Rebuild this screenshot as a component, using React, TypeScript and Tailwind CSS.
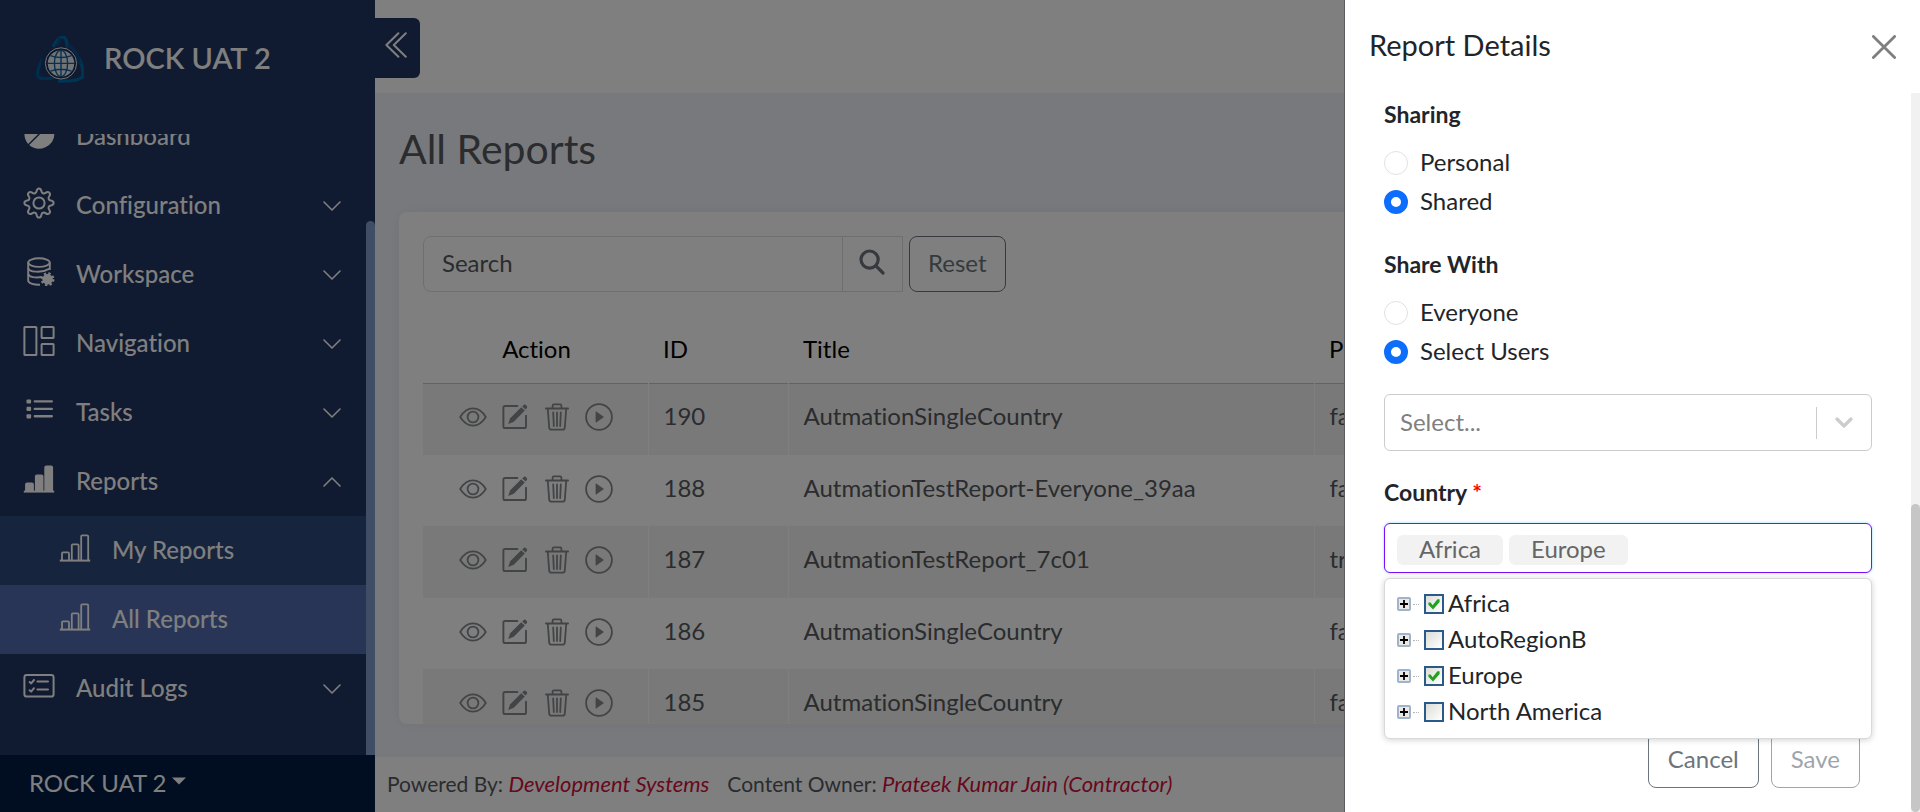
import { useState } from "react";
import type { ReactNode } from "react";

/* ---------- icons ---------- */

function Chevron({ up = false }: { up?: boolean }) {
  return (
    <svg viewBox="0 0 18 10" className="h-[10px] w-[18px]" fill="none" stroke="currentColor" strokeWidth="1.6" strokeLinecap="round" strokeLinejoin="round" aria-hidden="true">
      <path d={up ? "M1 9 L9 1 L17 9" : "M1 1 L9 9 L17 1"} />
    </svg>
  );
}

function DashboardIcon() {
  return (
    <svg viewBox="0 0 32 32" className="size-8" fill="currentColor" aria-hidden="true">
      <path d="M15.4 0.8 V15.8 L5.2 26 A15.4 15.4 0 0 1 15.4 0.8 Z" />
      <path d="M16.8 14.4 H31.4 A15.4 15.4 0 0 1 6.2 27 L16.8 16.4 Z" />
      <path d="M17 0.8 A15.4 15.4 0 0 1 31.2 13 H17 Z" />
    </svg>
  );
}

function GearIcon() {
  return (
    <svg viewBox="0 0 32 32" className="size-8" fill="none" stroke="currentColor" strokeWidth="2" strokeLinejoin="round" aria-hidden="true">
      <circle cx="16" cy="16" r="5.6" />
      <path d="M13.6 4.2 C13.9 2.3 14.6 1.4 16 1.4 C17.4 1.4 18.1 2.3 18.4 4.2 C18.7 6.3 20.8 7.1 22.5 5.9 C24.1 4.7 25.3 4.6 26.3 5.7 C27.4 6.7 27.3 7.9 26.1 9.5 C24.9 11.2 25.7 13.3 27.8 13.6 C29.7 13.9 30.6 14.6 30.6 16 C30.6 17.4 29.7 18.1 27.8 18.4 C25.7 18.7 24.9 20.8 26.1 22.5 C27.3 24.1 27.4 25.3 26.3 26.3 C25.3 27.4 24.1 27.3 22.5 26.1 C20.8 24.9 18.7 25.7 18.4 27.8 C18.1 29.7 17.4 30.6 16 30.6 C14.6 30.6 13.9 29.7 13.6 27.8 C13.3 25.7 11.2 24.9 9.5 26.1 C7.9 27.3 6.7 27.4 5.7 26.3 C4.6 25.3 4.7 24.1 5.9 22.5 C7.1 20.8 6.3 18.7 4.2 18.4 C2.3 18.1 1.4 17.4 1.4 16 C1.4 14.6 2.3 13.9 4.2 13.6 C6.3 13.3 7.1 11.2 5.9 9.5 C4.7 7.9 4.6 6.7 5.7 5.7 C6.7 4.6 7.9 4.7 9.5 5.9 C11.2 7.1 13.3 6.3 13.6 4.2 Z" />
    </svg>
  );
}

function DatabaseGearIcon() {
  return (
    <svg viewBox="0 0 32 32" className="size-8" fill="none" stroke="currentColor" strokeWidth="1.9" aria-hidden="true">
      <ellipse cx="16" cy="6.6" rx="10.8" ry="4.3" />
      <path d="M5.2 6.6 V24.6 C5.2 27 10 29 17 28.8" />
      <path d="M26.8 6.6 V14" />
      <path d="M5.2 11.8 C5.6 16 18 17.6 26.8 12.6" />
      <path d="M5.2 18 C6 21 12 22.2 19 21" />
      <circle cx="24.6" cy="23.2" r="5.2" fill="currentColor" stroke="none" />
      <circle cx="24.6" cy="23.2" r="5.6" strokeWidth="2.6" strokeDasharray="2.3 2.1" />
    </svg>
  );
}

function ColumnsIcon() {
  return (
    <svg viewBox="0 0 32 32" className="size-8" fill="none" stroke="currentColor" strokeWidth="2" strokeLinejoin="round" aria-hidden="true">
      <rect x="1.4" y="2" width="12" height="28" rx="0.6" />
      <rect x="18.6" y="2" width="12" height="11" rx="0.6" />
      <rect x="18.6" y="19" width="12" height="11" rx="0.6" />
    </svg>
  );
}

function ListIcon() {
  return (
    <svg viewBox="0 0 32 32" className="size-8" fill="currentColor" aria-hidden="true">
      <rect x="3.5" y="5.4" width="4.6" height="4.2" rx="1" />
      <rect x="3.5" y="12.8" width="4.6" height="4.2" rx="1" />
      <rect x="3.5" y="20.2" width="4.6" height="4.2" rx="1" />
      <rect x="10.6" y="6.3" width="19.4" height="2.3" rx="1.1" />
      <rect x="10.6" y="13.7" width="19.4" height="2.3" rx="1.1" />
      <rect x="10.6" y="21.1" width="19.4" height="2.3" rx="1.1" />
    </svg>
  );
}

function BarsIcon({ filled = false }: { filled?: boolean }) {
  return (
    <svg viewBox="0 0 32 32" className="size-8" fill={filled ? "currentColor" : "none"} stroke="currentColor" strokeWidth="1.8" strokeLinejoin="round" aria-hidden="true">
      <path d="M3 28.4 V21.4 Q3 20.4 4 20.4 H9 Q10 20.4 10 21.4 V28.4" />
      <path d="M12.8 28.4 V13.4 Q12.8 12.4 13.8 12.4 H18.6 Q19.6 12.4 19.6 13.4 V28.4" />
      <path d="M22.2 28.4 V4.4 Q22.2 3.4 23.2 3.4 H28.2 Q29.2 3.4 29.2 4.4 V28.4" />
      <path d="M0.8 28.6 H31.2" strokeWidth="2" />
    </svg>
  );
}

function CardChecklistIcon() {
  return (
    <svg viewBox="0 0 32 32" className="size-8" fill="none" stroke="currentColor" strokeWidth="2" strokeLinecap="round" strokeLinejoin="round" aria-hidden="true">
      <rect x="1.4" y="5" width="29.2" height="21.6" rx="2.4" />
      <path d="M14.4 11.4 H25 M14.4 19.6 H25" />
      <path d="M6.6 12 L8.2 13.4 L11 10 M6.6 20.2 L8.2 21.6 L11 18.2" />
    </svg>
  );
}

function Logo() {
  return (
    <svg viewBox="0 0 48 48" className="size-12" fill="none" aria-hidden="true">
      <path d="M17 11 C20 5 23 1.5 26.5 1 C30 0.8 31 5 31.5 11.5" stroke="#0068a8" strokeWidth="3.4" />
      <path d="M25 2 C22.5 5 22 7 21 10" stroke="#0a4f8c" strokeWidth="3" />
      <path d="M6.5 23 C3 30 0.6 37 2 40.5 C4 43.5 11 42.5 18 42" stroke="#005a98" strokeWidth="3.2" />
      <path d="M43 22 C46 29 48 36 46.5 41 C42 44.8 30 45.4 22 45" stroke="#0068a8" strokeWidth="3.4" />
      <path d="M12 15 C6 22 5 31 9 37" stroke="#12376e" strokeWidth="3" />
      <path d="M32 9 C39 13 43 20 43.5 28" stroke="#0a4f8c" strokeWidth="3" />
      <circle cx="25" cy="27.4" r="15.6" fill="#1b2a52" stroke="#e8edf2" strokeWidth="1" />
      <circle cx="25" cy="27.4" r="13.2" fill="#e4eaf0" />
      <g stroke="#12609c" strokeWidth="1.4">
        <ellipse cx="25" cy="27.4" rx="6.6" ry="13.2" />
        <path d="M25 14.2 V40.6 M11.8 27.4 H38.2 M14.4 19.6 Q25 23.4 35.6 19.6 M14.4 35.2 Q25 31.4 35.6 35.2" />
      </g>
    </svg>
  );
}

function EyeIcon() {
  return (
    <svg viewBox="0 0 28 28" className="size-7" fill="none" stroke="currentColor" strokeWidth="1.8" strokeLinejoin="round" aria-hidden="true">
      <path d="M1.2 14 C4.5 8.6 9 5.4 14 5.4 C19 5.4 23.5 8.6 26.8 14 C23.5 19.4 19 22.6 14 22.6 C9 22.6 4.5 19.4 1.2 14 Z" />
      <circle cx="14" cy="14" r="5.4" />
    </svg>
  );
}

function EditIcon() {
  return (
    <svg viewBox="0 0 28 28" className="size-7" aria-hidden="true">
      <path d="M16.4 3 H4 Q2.4 3 2.4 4.6 V23.4 Q2.4 25 4 25 H23.4 Q25 25 25 23.4 V12.8" fill="none" stroke="currentColor" strokeWidth="1.9" strokeLinecap="round" />
      <path d="M20.2 4.2 L23.8 7.4 L12.8 18.8 L7.2 21 L9.2 15.2 Z" fill="currentColor" />
      <path d="M21.2 3.4 L23 1.8 Q24.2 1.2 25.4 2.4 Q26.6 3.8 26 4.8 L24.6 6.4 Z" fill="currentColor" />
    </svg>
  );
}

function TrashIcon() {
  return (
    <svg viewBox="0 0 28 28" className="size-7" fill="none" stroke="currentColor" strokeWidth="1.8" strokeLinecap="round" strokeLinejoin="round" aria-hidden="true">
      <path d="M3 5.4 H25" strokeWidth="2" />
      <path d="M9.6 5 V2.6 Q9.6 1.4 10.8 1.4 H17.2 Q18.4 1.4 18.4 2.6 V5" />
      <path d="M4.8 6 L6.2 24.6 Q6.4 26.6 8.4 26.6 H19.6 Q21.6 26.6 21.8 24.6 L23.2 6" />
      <path d="M10.2 9.4 L10.8 23 M14 9.4 V23 M17.8 9.4 L17.2 23" />
    </svg>
  );
}

function PlayIcon() {
  return (
    <svg viewBox="0 0 28 28" className="size-7" aria-hidden="true">
      <circle cx="14" cy="14" r="12.9" fill="none" stroke="currentColor" strokeWidth="1.8" />
      <path d="M11 8.8 V19.2 L18.4 14 Z" fill="currentColor" stroke="currentColor" strokeWidth="0.8" strokeLinejoin="round" />
    </svg>
  );
}

/* ---------- sidebar ---------- */

interface NavItem {
  label: string;
  icon: ReactNode;
  arrow?: "down" | "up";
  sub?: boolean;
  active?: boolean;
}

const navItems: NavItem[] = [
  { label: "Dashboard", icon: <DashboardIcon /> },
  { label: "Configuration", icon: <GearIcon />, arrow: "down" },
  { label: "Workspace", icon: <DatabaseGearIcon />, arrow: "down" },
  { label: "Navigation", icon: <ColumnsIcon />, arrow: "down" },
  { label: "Tasks", icon: <ListIcon />, arrow: "down" },
  { label: "Reports", icon: <BarsIcon filled />, arrow: "up" },
  { label: "My Reports", icon: <BarsIcon />, sub: true },
  { label: "All Reports", icon: <BarsIcon />, sub: true, active: true },
  { label: "Audit Logs", icon: <CardChecklistIcon />, arrow: "down" },
];

function NavRow({ item }: { item: NavItem }) {
  const tone = item.active ? "bg-[#506aac] pl-[59px]" : item.sub ? "bg-[#2e487a] pl-[59px]" : "pl-[23px]";
  return (
    <li>
      <a href="#" className={`flex h-[69px] items-center pr-[25px] font-medium ${tone}`}>
        <span className="pb-[6px]">{item.icon}</span>
        <span className="ml-[21px] flex-1 pb-[2px]">{item.label}</span>
        {item.arrow && <Chevron up={item.arrow === "up"} />}
      </a>
    </li>
  );
}

function Sidebar() {
  return (
    <aside className="flex w-[375px] shrink-0 flex-col bg-[#203460] text-white">
      <div className="flex h-[134px] shrink-0 items-start gap-5 pt-9 pl-9">
        <Logo />
        <span className="text-[29px] leading-[44px] font-semibold">ROCK UAT 2</span>
      </div>
      <div className="flex min-h-0 flex-1 overflow-hidden">
        <nav className="-mt-8 flex-1">
          <ul>
            {navItems.map((item) => (
              <NavRow key={item.label} item={item} />
            ))}
          </ul>
        </nav>
        <div className="mt-[87px] w-[9px] rounded-t-full bg-[#7e9aca]" />
      </div>
      <button type="button" className="flex h-[57px] shrink-0 items-center gap-[5px] bg-[#021a40] pb-[2px] pl-[29px]">
        ROCK UAT 2
        <svg viewBox="0 0 14 8" className="mb-1 h-2 w-[14px]" fill="currentColor" aria-hidden="true">
          <path d="M0 0.4 H14 L7 7.6 Z" />
        </svg>
      </button>
    </aside>
  );
}

/* ---------- page ---------- */

const reports = [
  { id: 190, title: "AutmationSingleCountry", flag: "false" },
  { id: 188, title: "AutmationTestReport-Everyone_39aa", flag: "false" },
  { id: 187, title: "AutmationTestReport_7c01", flag: "true" },
  { id: 186, title: "AutmationSingleCountry", flag: "false" },
  { id: 185, title: "AutmationSingleCountry", flag: "false" },
];

function ReportsTable() {
  return (
    <table className="mt-6 w-full table-fixed text-left text-[#54585c]">
      <thead>
        <tr className="h-[67px] border-b border-[#c4c4c4] text-black">
          <th className="w-[225px] pl-[2px] text-center font-normal">Action</th>
          <th className="w-[140px] px-[15px] font-normal">ID</th>
          <th className="w-[526px] px-[15px] font-normal">Title</th>
          <th className="px-[15px] font-normal">Public</th>
        </tr>
      </thead>
      <tbody>
        {reports.map((r) => (
          <tr key={r.id} className="odd:h-[72px] odd:bg-[#f2f2f2] even:h-[71px]">
            <td className="border-r border-white pb-1 pl-[2px]">
              <div className="flex justify-center gap-[14px] text-[#85888b]">
                <button type="button" aria-label={`View report ${r.id}`}><EyeIcon /></button>
                <button type="button" aria-label={`Edit report ${r.id}`}><EditIcon /></button>
                <button type="button" aria-label={`Delete report ${r.id}`}><TrashIcon /></button>
                <button type="button" aria-label={`Run report ${r.id}`}><PlayIcon /></button>
              </div>
            </td>
            <td className="border-r border-white px-[15px] pb-[6px]">{r.id}</td>
            <td className="border-r border-white px-[15px] pb-[6px]">{r.title}</td>
            <td className="px-[15px] pb-[6px]">{r.flag}</td>
          </tr>
        ))}
      </tbody>
    </table>
  );
}

function Page() {
  return (
    <div className="flex min-w-0 flex-1 flex-col bg-[#f1f3fb]">
      <header className="h-[93px] shrink-0 bg-white pt-[18px]">
        <button type="button" aria-label="Collapse menu" className="flex h-[60px] w-[45px] items-center justify-center rounded-r-md bg-[#203460] pr-1 pb-[7px] text-white">
          <svg viewBox="0 0 22 26" className="h-[26px] w-[22px]" fill="none" stroke="currentColor" strokeWidth="2" strokeLinecap="round" strokeLinejoin="round" aria-hidden="true">
            <path d="M13.4 1.2 L1.4 13 L13.4 24.8 M20.8 1.2 L8.8 13 L20.8 24.8" />
          </svg>
        </button>
      </header>
      <main className="flex min-h-0 flex-1 flex-col px-6 pt-8 pb-[33px]">
        <h1 className="mb-[39px] text-[41px] leading-[48px] text-[#54585c]">All Reports</h1>
        <section className="min-h-0 flex-1 overflow-hidden rounded-lg bg-white px-6 pt-6 shadow-[0_0_12px_rgba(0,0,0,0.06)]">
          <form className="flex h-14" onSubmit={(e) => e.preventDefault()}>
            <input
              type="text"
              aria-label="Search"
              placeholder="Search"
              className="w-[420px] rounded-l-lg border border-[#dcdfe3] px-[18px] pb-[2px] placeholder:text-[#54585c]"
            />
            <button type="submit" aria-label="Run search" className="-ml-px flex w-[61px] items-center justify-center border border-[#dcdfe3] pr-[2px] pb-1 text-[#6c757d]">
              <svg viewBox="0 0 26 26" className="size-[26px]" fill="none" stroke="currentColor" strokeWidth="3.2" strokeLinecap="round" aria-hidden="true">
                <circle cx="10.6" cy="10.6" r="8.6" />
                <path d="M17.2 17.2 L24 24" />
              </svg>
            </button>
            <button type="reset" className="ml-[6px] rounded-lg border border-[#6c757d] px-[18px] pb-[2px] text-[#6c757d]">
              Reset
            </button>
          </form>
          <ReportsTable />
        </section>
      </main>
      <footer className="flex h-[55px] shrink-0 items-center gap-[18px] bg-white pb-[2px] pl-3 text-[21px] text-[#54585c]">
        <span>
          Powered By: <a href="#" className="text-[22px] text-[#d0103c] italic">Development Systems</a>
        </span>
        <span>
          Content Owner: <a href="#" className="text-[22px] text-[#d0103c] italic">Prateek Kumar Jain (Contractor)</a>
        </span>
      </footer>
    </div>
  );
}

/* ---------- drawer ---------- */

function RadioGroup({ legend, name, options, value, onChange }: {
  legend: string;
  name: string;
  options: string[];
  value: string;
  onChange: (v: string) => void;
}) {
  return (
    <fieldset>
      <legend className="mb-[11px] text-[23px] leading-9 font-bold">{legend}</legend>
      {options.map((o) => (
        <label key={o} className="flex h-[39px] items-center gap-3">
          <input
            type="radio"
            name={name}
            checked={value === o}
            onChange={() => onChange(o)}
            className="size-6 appearance-none rounded-full border border-[#dee2e6] bg-white checked:border-[7px] checked:border-[#0d6efd]"
          />
          <span className="pb-[2px]">{o}</span>
        </label>
      ))}
    </fieldset>
  );
}

const regions = ["Africa", "AutoRegionB", "Europe", "North America"];

function RegionRow({ name, checked, onToggle }: { name: string; checked: boolean; onToggle: () => void }) {
  return (
    <li className="flex h-9 items-center">
      <button type="button" aria-label={`Expand ${name}`} className="flex size-[14px] items-center justify-center rounded-[2px] border-2 border-[#9db4cc] bg-[#ece8e2]">
        <svg viewBox="0 0 8 8" className="size-2" stroke="#000" strokeWidth="1.8" aria-hidden="true">
          <path d="M0 4 H8 M4 0 V8" />
        </svg>
      </button>
      <span className="ml-[2px] w-[6px] border-t border-dotted border-[#b4b4b4]" />
      <label className="ml-[5px] flex items-center gap-1">
        <span className="grid size-5">
          <input
            type="checkbox"
            checked={checked}
            onChange={onToggle}
            className="col-start-1 row-start-1 size-5 appearance-none border-2 border-[#2a5a8a] bg-linear-to-br from-[#dcdcd8] to-white"
          />
          {checked && (
            <svg viewBox="0 0 20 20" className="pointer-events-none col-start-1 row-start-1 size-5" fill="#21a121" aria-hidden="true">
              <path d="M4.4 8.4 L6.6 8.4 L8.6 11.2 L13.4 5.2 L15.6 5.2 L15.6 8 L9 15.6 L4.4 10.8 Z" />
            </svg>
          )}
        </span>
        <span className="pb-[2px]">{name}</span>
      </label>
    </li>
  );
}

function Drawer() {
  const [sharing, setSharing] = useState("Shared");
  const [shareWith, setShareWith] = useState("Select Users");
  const [picked, setPicked] = useState<string[]>(["Africa", "Europe"]);
  const toggle = (name: string) =>
    setPicked((p) => (p.includes(name) ? p.filter((x) => x !== name) : [...p, name]));

  return (
    <div role="dialog" aria-labelledby="drawer-title" className="fixed inset-y-0 right-0 flex w-[576px] flex-col border-l border-[#5c5c60] bg-white text-[#212529]">
      <div className="flex h-[93px] shrink-0 items-center justify-between pr-6 pl-6">
        <h2 id="drawer-title" className="pb-1 text-[29px] leading-9">Report Details</h2>
        <button type="button" aria-label="Close">
          <svg viewBox="0 0 24 24" className="size-6" fill="none" stroke="#7f7f7f" strokeWidth="2.8" strokeLinecap="round" aria-hidden="true">
            <path d="M1.4 1.4 L22.6 22.6 M22.6 1.4 L1.4 22.6" />
          </svg>
        </button>
      </div>
      <div className="flex min-h-0 flex-1">
        <div className="min-w-0 flex-1 overflow-hidden pt-[3px] pr-[39px] pl-[39px]">
          <RadioGroup legend="Sharing" name="sharing" options={["Personal", "Shared"]} value={sharing} onChange={setSharing} />
          <div className="mt-[25px]">
            <RadioGroup legend="Share With" name="share-with" options={["Everyone", "Select Users"]} value={shareWith} onChange={setShareWith} />
          </div>

          <div className="mt-[23px] grid h-[57px] items-center">
            <select aria-label="Users" className="col-start-1 row-start-1 h-full w-full appearance-none rounded-md border border-[#cccccc] bg-white px-[15px] pb-[2px] text-[#808080]">
              <option>Select...</option>
            </select>
            <div className="pointer-events-none col-start-1 row-start-1 flex items-center gap-[18px] justify-self-end pr-[19px]">
              <span className="h-8 w-px bg-[#cccccc]" />
              <svg viewBox="0 0 18 12" className="h-3 w-[18px]" fill="none" stroke="#cccccc" strokeWidth="3.2" strokeLinecap="round" strokeLinejoin="round" aria-hidden="true">
                <path d="M2 2 L9 9 L16 2" />
              </svg>
            </div>
          </div>

          <div className="mt-[23px] mb-[13px] text-[23px] leading-9 font-bold" id="country-label">
            Country <span className="text-[#ff0000]">*</span>
          </div>
          <div className="relative z-10">
            <div role="group" aria-labelledby="country-label" className="flex h-[50px] gap-[6px] rounded-md border border-[#7a10f5] bg-white pt-[11px] pl-3 shadow-[0_0_3px_rgba(0,160,255,0.45)]">
              {picked.map((p) => (
                <span key={p} className="h-[30px] rounded-md bg-[#f2f2f2] px-[22px] leading-[28px] text-[#666666]">
                  {p}
                </span>
              ))}
            </div>
            <ul className="absolute inset-x-0 top-[55px] rounded-md border border-[#d9d9d9] bg-white pt-[7px] pb-2 pl-3 shadow-[0_1px_6px_rgba(0,0,0,0.18)]">
              {regions.map((r) => (
                <RegionRow key={r} name={r} checked={picked.includes(r)} onToggle={() => toggle(r)} />
              ))}
            </ul>
          </div>

          <div className="mt-[159px] flex h-14 justify-end gap-3 pr-3 text-[#6c757d]">
            <button type="button" className="rounded-lg border border-[#6c757d] px-[19px] pb-[2px]">Cancel</button>
            <button type="button" disabled className="rounded-lg border border-[#6c757d] px-[19px] pb-[2px] opacity-65">Save</button>
          </div>
        </div>
        <div className="w-[9px] shrink-0 bg-[#f1f1f1] pt-[411px]">
          <div className="h-full rounded-full bg-[#c6c6c6]" />
        </div>
      </div>
    </div>
  );
}

export default function App() {
  return (
    <div className="flex h-screen overflow-hidden font-['Lato',sans-serif] text-2xl leading-9 [font-variant-ligatures:none]">
      <Sidebar />
      <Page />
      <div className="fixed inset-0 bg-black/50" />
      <Drawer />
    </div>
  );
}
